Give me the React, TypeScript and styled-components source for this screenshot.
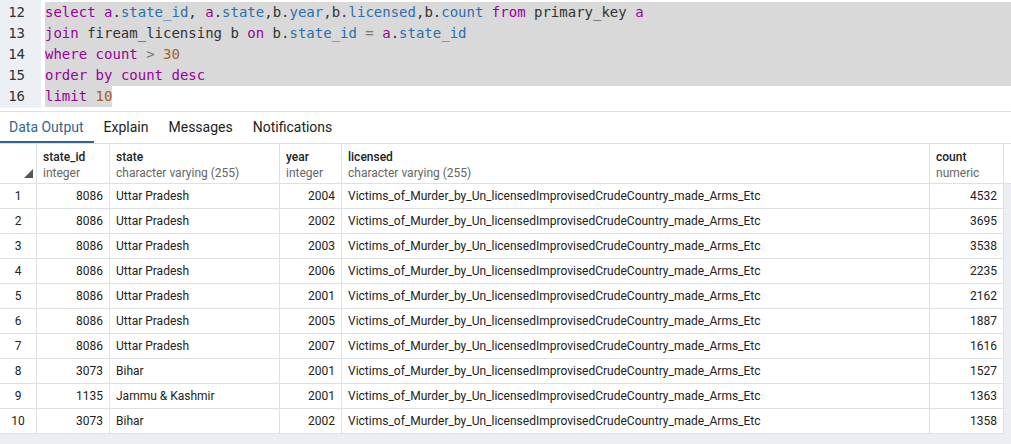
import React from "react";
import styled, { createGlobalStyle } from "styled-components";

const Global = createGlobalStyle`
  html, body { margin: 0; padding: 0; background: #fff; }
  body { font-family: Roboto, "Liberation Sans", sans-serif; }
`;

const Page = styled.div`
  width: 1011px;
  height: 444px;
  display: flex;
  flex-direction: column;
  overflow: hidden;
  background: #fff;
`;

const Editor = styled.div`
  display: flex;
  height: 108px;
  flex: none;
`;

const Gutter = styled.div`
  width: 41px;
  background: #eceff4;
  padding-top: 2px;
  box-sizing: border-box;
  flex: none;
`;

const LineNo = styled.div`
  height: 21px;
  line-height: 21px;
  width: 25px;
  text-align: right;
  font-family: "DejaVu Sans Mono", "Liberation Mono", monospace;
  font-size: 14px;
  color: #333;
`;

const Code = styled.div`
  flex: 1;
  padding-top: 2px;
  padding-left: 4px;
`;

const CodeLine = styled.div<{ $sel?: boolean }>`
  height: 21px;
  line-height: 21px;
  font-family: "DejaVu Sans Mono", "Liberation Mono", monospace;
  font-size: 14px;
  color: #333;
  white-space: pre;
  background: ${(p) => (p.$sel ? "#d9d9d9" : "transparent")};
`;

const SelSpan = styled.span`
  background: #d9d9d9;
  display: inline-block;
  height: 21px;
`;

const K = styled.span`color: #990099;`;
const P = styled.span`color: #2c6fac;`;
const N = styled.span`color: #a0602d;`;
const O = styled.span`color: #777;`;

const Separator = styled.div`
  margin-top: 3px;
  height: 1px;
  background: #dde1e6;
  flex: none;
`;

const Tabs = styled.div`
  display: flex;
  height: 31px;
  flex: none;
`;

const Tab = styled.div<{ $active?: boolean }>`
  padding: 0 10px 0 9px;
  margin-right: 1px;
  display: flex;
  align-items: center;
  font-size: 14px;
  color: ${(p) => (p.$active ? "#326690" : "#222")};
  border-bottom: 2px solid ${(p) => (p.$active ? "#326690" : "transparent")};
  box-sizing: border-box;
`;

const GridArea = styled.div`
  flex: 1;
  background: #eceef3;
  display: flex;
  flex-direction: column;
`;

const cols = "37px 73px 170px 62px 588px 74px";

const HeaderRow = styled.div`
  display: grid;
  grid-template-columns: ${cols} 1fr;
  height: 41px;
  background: #fff;
  border-top: 1px solid #dde1e6;
  border-bottom: 1px solid #dde1e6;
  box-sizing: border-box;
`;

const HeadCell = styled.div`
  border-right: 1px solid #dde1e6;
  padding: 5px 0 0 6px;
  display: flex;
  flex-direction: column;
  font-size: 12px;
  line-height: 16px;
  position: relative;
`;

const HeadName = styled.span`
  font-weight: 500;
  color: #222;
`;

const HeadType = styled.span`
  color: #666;
`;

const SortMark = styled.svg`
  position: absolute;
  left: 24px;
  bottom: 5px;
`;

const Row = styled.div`
  display: grid;
  grid-template-columns: ${cols};
  height: 25px;
  width: 1004px;
  background: #fff;
  border-bottom: 1px solid #dde1e6;
  box-sizing: border-box;
`;

const Cell = styled.div<{ $align?: "left" | "right" | "center" }>`
  border-right: 1px solid #dde1e6;
  font-size: 12px;
  color: #222;
  line-height: 24px;
  padding: 0 6px;
  text-align: ${(p) => p.$align || "left"};
  white-space: nowrap;
  overflow: hidden;
`;

const LIC = "Victims_of_Murder_by_Un_licensedImprovisedCrudeCountry_made_Arms_Etc";

const rows: [string, string, string, string][] = [
  ["8086", "Uttar Pradesh", "2004", "4532"],
  ["8086", "Uttar Pradesh", "2002", "3695"],
  ["8086", "Uttar Pradesh", "2003", "3538"],
  ["8086", "Uttar Pradesh", "2006", "2235"],
  ["8086", "Uttar Pradesh", "2001", "2162"],
  ["8086", "Uttar Pradesh", "2005", "1887"],
  ["8086", "Uttar Pradesh", "2007", "1616"],
  ["3073", "Bihar", "2001", "1527"],
  ["1135", "Jammu & Kashmir", "2001", "1363"],
  ["3073", "Bihar", "2002", "1358"],
];

const headers: [string, string][] = [
  ["state_id", "integer"],
  ["state", "character varying (255)"],
  ["year", "integer"],
  ["licensed", "character varying (255)"],
  ["count", "numeric"],
];

export default function App() {
  return (
    <Page>
      <Global />
      <Editor>
        <Gutter>
          {[12, 13, 14, 15, 16].map((n) => (
            <LineNo key={n}>{n}</LineNo>
          ))}
        </Gutter>
        <Code>
          <CodeLine $sel>
            <K>select</K> <K>a</K>.<P>state_id</P>, <K>a</K>.<P>state</P>,b.<P>year</P>,b.<P>licensed</P>,b.<P>count</P> <K>from</K> primary_key <K>a</K>
          </CodeLine>
          <CodeLine $sel>
            <K>join</K> fiream_licensing b <K>on</K> b.<P>state_id</P> <O>=</O> <K>a</K>.<P>state_id</P>
          </CodeLine>
          <CodeLine $sel>
            <K>where</K> <K>count</K> <O>&gt;</O> <N>30</N>
          </CodeLine>
          <CodeLine $sel>
            <K>order</K> <K>by</K> <K>count</K> <K>desc</K>
          </CodeLine>
          <CodeLine>
            <SelSpan>
              <K>limit</K> <N>10</N>
            </SelSpan>
          </CodeLine>
        </Code>
      </Editor>
      <Separator />
      <Tabs>
        <Tab $active>Data Output</Tab>
        <Tab>Explain</Tab>
        <Tab>Messages</Tab>
        <Tab>Notifications</Tab>
      </Tabs>
      <GridArea>
        <HeaderRow>
          <HeadCell>
            <SortMark width="9" height="9" viewBox="0 0 9 9">
              <polygon points="9,0 9,9 0,9" fill="#555" />
            </SortMark>
          </HeadCell>
          {headers.map(([n, t]) => (
            <HeadCell key={n}>
              <HeadName>{n}</HeadName>
              <HeadType>{t}</HeadType>
            </HeadCell>
          ))}
          <div />
        </HeaderRow>
        {rows.map((r, i) => (
          <Row key={i}>
            <Cell $align="center">{i + 1}</Cell>
            <Cell $align="right">{r[0]}</Cell>
            <Cell>{r[1]}</Cell>
            <Cell $align="right">{r[2]}</Cell>
            <Cell>{LIC}</Cell>
            <Cell $align="right">{r[3]}</Cell>
          </Row>
        ))}
      </GridArea>
    </Page>
  );
}
